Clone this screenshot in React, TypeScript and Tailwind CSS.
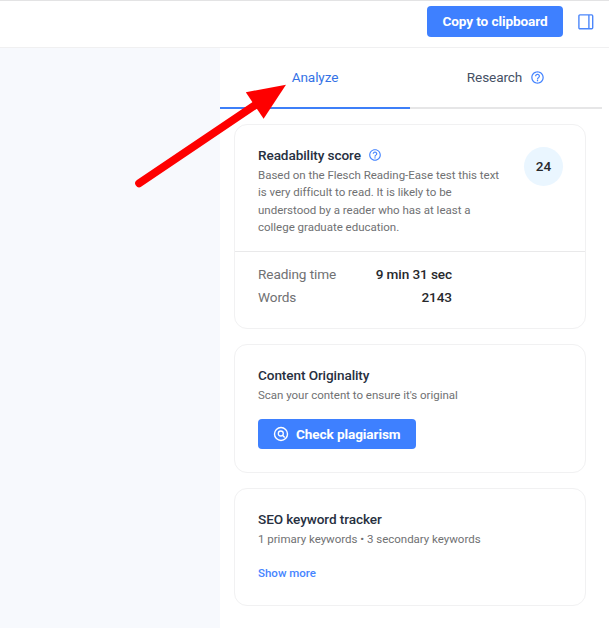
import type { ReactNode } from 'react';

const SUMMARY_LINES = [
  'Based on the Flesch Reading-Ease test this text',
  'is very difficult to read. It is likely to be',
  'understood by a reader who has at least a',
  'college graduate education.',
];

const STATS = [
  { label: 'Reading time', value: '9 min 31 sec' },
  { label: 'Words', value: '2143' },
];

function HelpIcon({ className }: { className: string }) {
  return (
    <svg viewBox="0 0 24 24" fill="currentColor" className={className} aria-hidden="true">
      <path d="M11 18h2v-2h-2v2zm1-16C6.48 2 2 6.48 2 12s4.48 10 10 10 10-4.48 10-10S17.52 2 12 2zm0 18c-4.41 0-8-3.59-8-8s3.59-8 8-8 8 3.59 8 8-3.59 8-8 8zm0-14c-2.21 0-4 1.79-4 4h2c0-1.1.9-2 2-2s2 .9 2 2c0 2-3 1.75-3 5h2c0-2.25 3-2.5 3-5 0-2.21-1.79-4-4-4z" />
    </svg>
  );
}

function SidebarIcon() {
  return (
    <svg
      viewBox="0 0 16 16"
      fill="none"
      stroke="currentColor"
      strokeWidth="1.4"
      className="h-4 w-4"
      aria-hidden="true"
    >
      <rect x="0.9" y="0.9" width="13.8" height="13.8" rx="1" />
      <path d="M10.9 1v13.8" />
    </svg>
  );
}

function PlagiarismIcon() {
  return (
    <svg
      viewBox="0 0 16 16"
      fill="none"
      stroke="currentColor"
      className="h-4 w-4 shrink-0"
      aria-hidden="true"
    >
      <circle cx="8" cy="8" r="6.5" strokeWidth="1.4" />
      <circle cx="7.8" cy="7.5" r="2.5" strokeWidth="1.3" />
      <path d="M9.5 9.3l2.2 2.3" strokeWidth="1.4" />
    </svg>
  );
}

function Card({ className, children }: { className: string; children: ReactNode }) {
  return (
    <section className={`rounded-[13px] border border-[#f1f1f2] bg-white ${className}`}>
      {children}
    </section>
  );
}

function CardTitle({ children }: { children: ReactNode }) {
  return (
    <h2 className="text-[13.6px] leading-5 font-medium tracking-[-0.1px] whitespace-nowrap text-[#27303f]">
      {children}
    </h2>
  );
}

function PointerArrow() {
  return (
    <svg
      viewBox="0 0 609 628"
      className="pointer-events-none absolute top-0 left-0 h-[628px] w-[609px]"
      aria-hidden="true"
    >
      <path d="M139.2 183.3L256 104.5" stroke="#fe0000" strokeWidth="8" strokeLinecap="round" />
      <path d="M286 84.7L245.8 92.3L263.6 118.8Z" fill="#fe0000" />
    </svg>
  );
}

export default function App() {
  return (
    <div className="relative flex h-[628px] w-[609px] flex-col overflow-hidden bg-white font-['Roboto',sans-serif]">
      <header className="flex h-12 shrink-0 items-start justify-end border-t border-b border-t-[#e3e3e4] border-b-[#f0f0f1] pt-[5px] pr-[15px]">
        <button className="h-[31px] w-[136px] rounded-[4px] bg-[#3e80ff] text-[13.6px] font-bold tracking-[-0.1px] whitespace-nowrap text-white">
          Copy to clipboard
        </button>
        <button className="mt-[8px] ml-[15px] text-[#4c87fb]" aria-label="Toggle sidebar">
          <SidebarIcon />
        </button>
      </header>

      <div className="flex min-h-0 flex-1">
        <div className="w-[220px] shrink-0 bg-[#f7f9fd]" />

        <aside className="w-[389px]">
          <nav className="flex h-[61px] w-[382px]">
            <button className="w-[190px] border-b-2 border-[#3e7ff8] text-[13.6px] tracking-[-0.1px] text-[#3472e6]">
              Analyze
            </button>
            <button className="flex w-[192px] items-center justify-center gap-2 border-b-2 border-[#e6e6e7] text-[13.6px] tracking-[-0.1px] text-[#465165]">
              Research
              <HelpIcon className="h-[15px] w-[15px] text-[#4685ff]" />
            </button>
          </nav>

          <div className="flex flex-col gap-[15px] pt-[15px] pl-[14px]">
            <Card className="h-[205px] w-[352px]">
              <div className="flex h-[127px] justify-between border-b border-[#e9e9ea] pt-5 pr-[22px] pl-[23px]">
                <div>
                  <div className="flex items-center gap-[7px]">
                    <CardTitle>Readability score</CardTitle>
                    <HelpIcon className="h-[14px] w-[14px] text-[#4685ff]" />
                  </div>
                  <p className="mt-[2px] text-[11.5px] leading-[17.3px] tracking-[-0.015px] whitespace-nowrap text-[#707173]">
                    {SUMMARY_LINES.map((line) => (
                      <span key={line} className="block">
                        {line}
                      </span>
                    ))}
                  </p>
                </div>
                <div className="mt-[2px] flex h-[39px] w-[39px] items-center justify-center rounded-full bg-[#eaf6ff] text-[13.6px] font-medium text-[#27292c]">
                  24
                </div>
              </div>
              <dl className="w-[217px] pt-[11px] pl-[23px] text-[13.6px] leading-[23px] tracking-[-0.1px]">
                {STATS.map((stat) => (
                  <div key={stat.label} className="flex justify-between whitespace-nowrap">
                    <dt className="text-[#707173]">{stat.label}</dt>
                    <dd className="font-medium text-[#27292c]">{stat.value}</dd>
                  </div>
                ))}
              </dl>
            </Card>

            <Card className="h-[129px] w-[352px] pt-5 pl-[23px]">
              <CardTitle>Content Originality</CardTitle>
              <p className="mt-[2px] text-[11.5px] leading-[17px] tracking-[-0.015px] text-[#707173]">
                Scan your content to ensure it's original
              </p>
              <button className="mt-[15px] flex h-[30px] w-[158px] items-center rounded-[4px] bg-[#3e80ff] pl-[15px] text-[13.6px] font-bold tracking-[-0.1px] whitespace-nowrap text-white">
                <PlagiarismIcon />
                <span className="ml-[7px]">Check plagiarism</span>
              </button>
            </Card>

            <Card className="h-[118px] w-[352px] pt-5 pl-[23px]">
              <CardTitle>SEO keyword tracker</CardTitle>
              <p className="mt-[2px] text-[11.5px] leading-[17px] tracking-[-0.015px] text-[#707173]">
                1 primary keywords • 3 secondary keywords
              </p>
              <button className="mt-[16px] block text-[11.5px] leading-[18px] font-medium text-[#4685ff]">
                Show more
              </button>
            </Card>
          </div>
        </aside>
      </div>

      <PointerArrow />
    </div>
  );
}
